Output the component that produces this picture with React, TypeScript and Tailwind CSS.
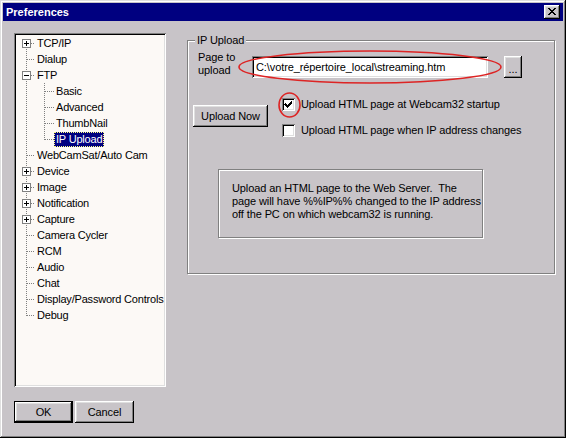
import React from 'react';

type TreeItem = {
  label: string;
  level: 0 | 1;
  box?: 'plus' | 'minus';
  selected?: boolean;
};

const treeItems: TreeItem[] = [
  { label: 'TCP/IP', level: 0, box: 'plus' },
  { label: 'Dialup', level: 0 },
  { label: 'FTP', level: 0, box: 'minus' },
  { label: 'Basic', level: 1 },
  { label: 'Advanced', level: 1 },
  { label: 'ThumbNail', level: 1 },
  { label: 'IP Upload', level: 1, selected: true },
  { label: 'WebCamSat/Auto Cam', level: 0 },
  { label: 'Device', level: 0, box: 'plus' },
  { label: 'Image', level: 0, box: 'plus' },
  { label: 'Notification', level: 0, box: 'plus' },
  { label: 'Capture', level: 0, box: 'plus' },
  { label: 'Camera Cycler', level: 0 },
  { label: 'RCM', level: 0 },
  { label: 'Audio', level: 0 },
  { label: 'Chat', level: 0 },
  { label: 'Display/Password Controls', level: 0 },
  { label: 'Debug', level: 0 },
];

const raised =
  'shadow-[inset_-1px_-1px_0_#000,inset_1px_1px_0_#fff,inset_-2px_-2px_0_#808080,inset_2px_2px_0_#dfdfdf]';
const sunken =
  'shadow-[inset_1px_1px_0_#808080,inset_-1px_-1px_0_#fff,inset_2px_2px_0_#000,inset_-2px_-2px_0_#dfdfdf]';
const etched = 'border border-[#808080] shadow-[1px_1px_0_#fff,inset_1px_1px_0_#fff]';

// dotted connector lines + expand box for one tree row
function Connector({ item, index }: { item: TreeItem; index: number }) {
  const first = index === 0;
  const last = index === treeItems.length - 1;
  const lastChild = item.level === 1 && treeItems[index + 1]?.level !== 1;
  const width = item.level === 0 ? 19 : 38;
  const dot = { stroke: '#808080', strokeWidth: 1, strokeDasharray: '1 1' };

  return (
    <svg width={width} height={16} className="shrink-0" shapeRendering="crispEdges">
      <line x1={10.5} x2={10.5} y1={first ? 8 : 0} y2={last ? 9 : 16} {...dot} />
      {item.level === 0 ? (
        <line x1={11} x2={19} y1={8.5} y2={8.5} {...dot} />
      ) : (
        <>
          <line x1={28.5} x2={28.5} y1={0} y2={lastChild ? 9 : 16} {...dot} />
          <line x1={29} x2={38} y1={8.5} y2={8.5} {...dot} />
        </>
      )}
      {item.box && (
        <g>
          <rect x={6.5} y={4.5} width={8} height={8} fill="#fff" stroke="#808080" />
          <line x1={8} x2={13} y1={8.5} y2={8.5} stroke="#000" />
          {item.box === 'plus' && <line x1={10.5} x2={10.5} y1={6} y2={11} stroke="#000" />}
        </g>
      )}
    </svg>
  );
}

function Checkbox({ checked }: { checked?: boolean }) {
  return (
    <span className={`block w-[13px] h-[13px] shrink-0 bg-white ${sunken}`}>
      {checked && (
        <svg width={13} height={13} shapeRendering="crispEdges">
          <path
            d="M3 5h1v1h1v1h1v-1h1v-1h1v-1h1v-1h1v3h-1v1h-1v1h-1v1h-1v1h-1v-1h-1v-1h-1v-1h-1z"
            fill="#000"
          />
        </svg>
      )}
    </span>
  );
}

function Button({ children, className = '', isDefault = false }: { children: React.ReactNode; className?: string; isDefault?: boolean }) {
  return (
    <button
      className={`flex items-center justify-center bg-[#c8c4c8] text-black ${
        isDefault ? 'border border-black' : ''
      } ${className}`}
    >
      <span className={`flex items-center justify-center w-full h-full ${raised}`}>{children}</span>
    </button>
  );
}

export default function App() {
  return (
    <div
      className={`relative w-[566px] h-[438px] bg-[#c8c4c8] flex flex-col text-[11px] tracking-[-0.1px] text-black font-['Liberation_Sans',Arial,sans-serif] shadow-[inset_-1px_-1px_0_#000,inset_1px_1px_0_#dfdfdf,inset_-2px_-2px_0_#808080,inset_2px_2px_0_#fff]`}
    >
      {/* title bar */}
      <div className="mx-[3px] mt-[3px] h-[18px] bg-[#000080] flex items-center justify-between pl-[3px] pr-[3px]">
        <span className="text-white font-bold text-[11px] tracking-normal leading-none">Preferences</span>
        <span className={`w-[16px] h-[14px] bg-[#c8c4c8] ${raised} flex items-center justify-center`}>
          <svg width={16} height={14} shapeRendering="crispEdges">
            <g fill="#000">
              <rect x={4} y={3} width={2} height={1} />
              <rect x={10} y={3} width={2} height={1} />
              <rect x={5} y={4} width={2} height={1} />
              <rect x={9} y={4} width={2} height={1} />
              <rect x={6} y={5} width={4} height={1} />
              <rect x={7} y={6} width={2} height={1} />
              <rect x={6} y={7} width={4} height={1} />
              <rect x={5} y={8} width={2} height={1} />
              <rect x={9} y={8} width={2} height={1} />
              <rect x={4} y={9} width={2} height={1} />
              <rect x={10} y={9} width={2} height={1} />
            </g>
          </svg>
        </span>
      </div>

      <div className="flex pl-[14px] pt-[12px]">
        {/* left column: tree + dialog buttons */}
        <div className="flex flex-col">
          <div className={`w-[152px] h-[354px] bg-[#fcf9f6] pt-[2px] pl-[2px] tracking-[-0.2px] ${sunken}`}>
            {treeItems.map((item, i) => (
              <div key={item.label} className="flex items-center h-[16px]">
                <Connector item={item} index={i} />
                {item.selected ? (
                  <span className="h-[15px] flex items-center px-[1px] bg-[#000080] text-white border border-dotted border-[#ffff80] whitespace-nowrap">
                    {item.label}
                  </span>
                ) : (
                  <span className="px-[2px] leading-[16px] whitespace-nowrap">{item.label}</span>
                )}
              </div>
            ))}
          </div>
          <div className="flex gap-[2px] mt-[14px]">
            <Button isDefault className="w-[59px] h-[22px]">OK</Button>
            <Button className="w-[59px] h-[22px]">Cancel</Button>
          </div>
        </div>

        {/* right column: IP Upload group */}
        <div className={`ml-[21px] mt-[7px] w-[368px] h-[234px] flex flex-col ${etched}`}>
          <span className="-mt-[7px] ml-[7px] px-[2px] self-start bg-[#c8c4c8] leading-[13px]">IP Upload</span>

          <div className="flex items-start ml-[10px] mt-[4px]">
            <div className="w-[54px] leading-[13px]">
              Page to
              <br />
              upload
            </div>
            <div className={`mt-[5px] w-[236px] h-[22px] bg-white flex items-center pl-[4px] ${sunken}`}>
              {'C:\\votre_répertoire_local\\streaming.htm'}
            </div>
            <Button className="ml-[16px] mt-[5px] w-[18px] h-[22px]">
              <span className="mt-[4px]">...</span>
            </Button>
          </div>

          <div className="flex items-start ml-[5px] mt-[20px]">
            <Button className="mt-[7px] w-[75px] h-[22px]">Upload Now</Button>
            <div className="ml-[14px] flex flex-col gap-[13px]">
              <label className="flex items-center gap-[6px] leading-[13px]">
                <Checkbox checked />
                Upload HTML page at Webcam32 startup
              </label>
              <label className="flex items-center gap-[6px] leading-[13px]">
                <Checkbox />
                Upload HTML page when IP address changes
              </label>
            </div>
          </div>

          <div className={`ml-[30px] mt-[32px] w-[265px] h-[69px] pl-[13px] pt-[12px] leading-[13px] whitespace-pre ${etched}`}>
            {'Upload an HTML page to the Web Server.  The\npage will have %%IP%% changed to the IP address\noff the PC on which webcam32 is running.'}
          </div>
        </div>
      </div>

      {/* red marker annotations drawn over the dialog */}
      <svg className="absolute inset-0 pointer-events-none" width={566} height={438}>
        <ellipse cx={370} cy={67} rx={131} ry={16} fill="none" stroke="#dd2424" strokeWidth={1.6} />
        <ellipse cx={289.5} cy={105} rx={10.5} ry={12} fill="none" stroke="#dd2424" strokeWidth={1.6} />
      </svg>
    </div>
  );
}
